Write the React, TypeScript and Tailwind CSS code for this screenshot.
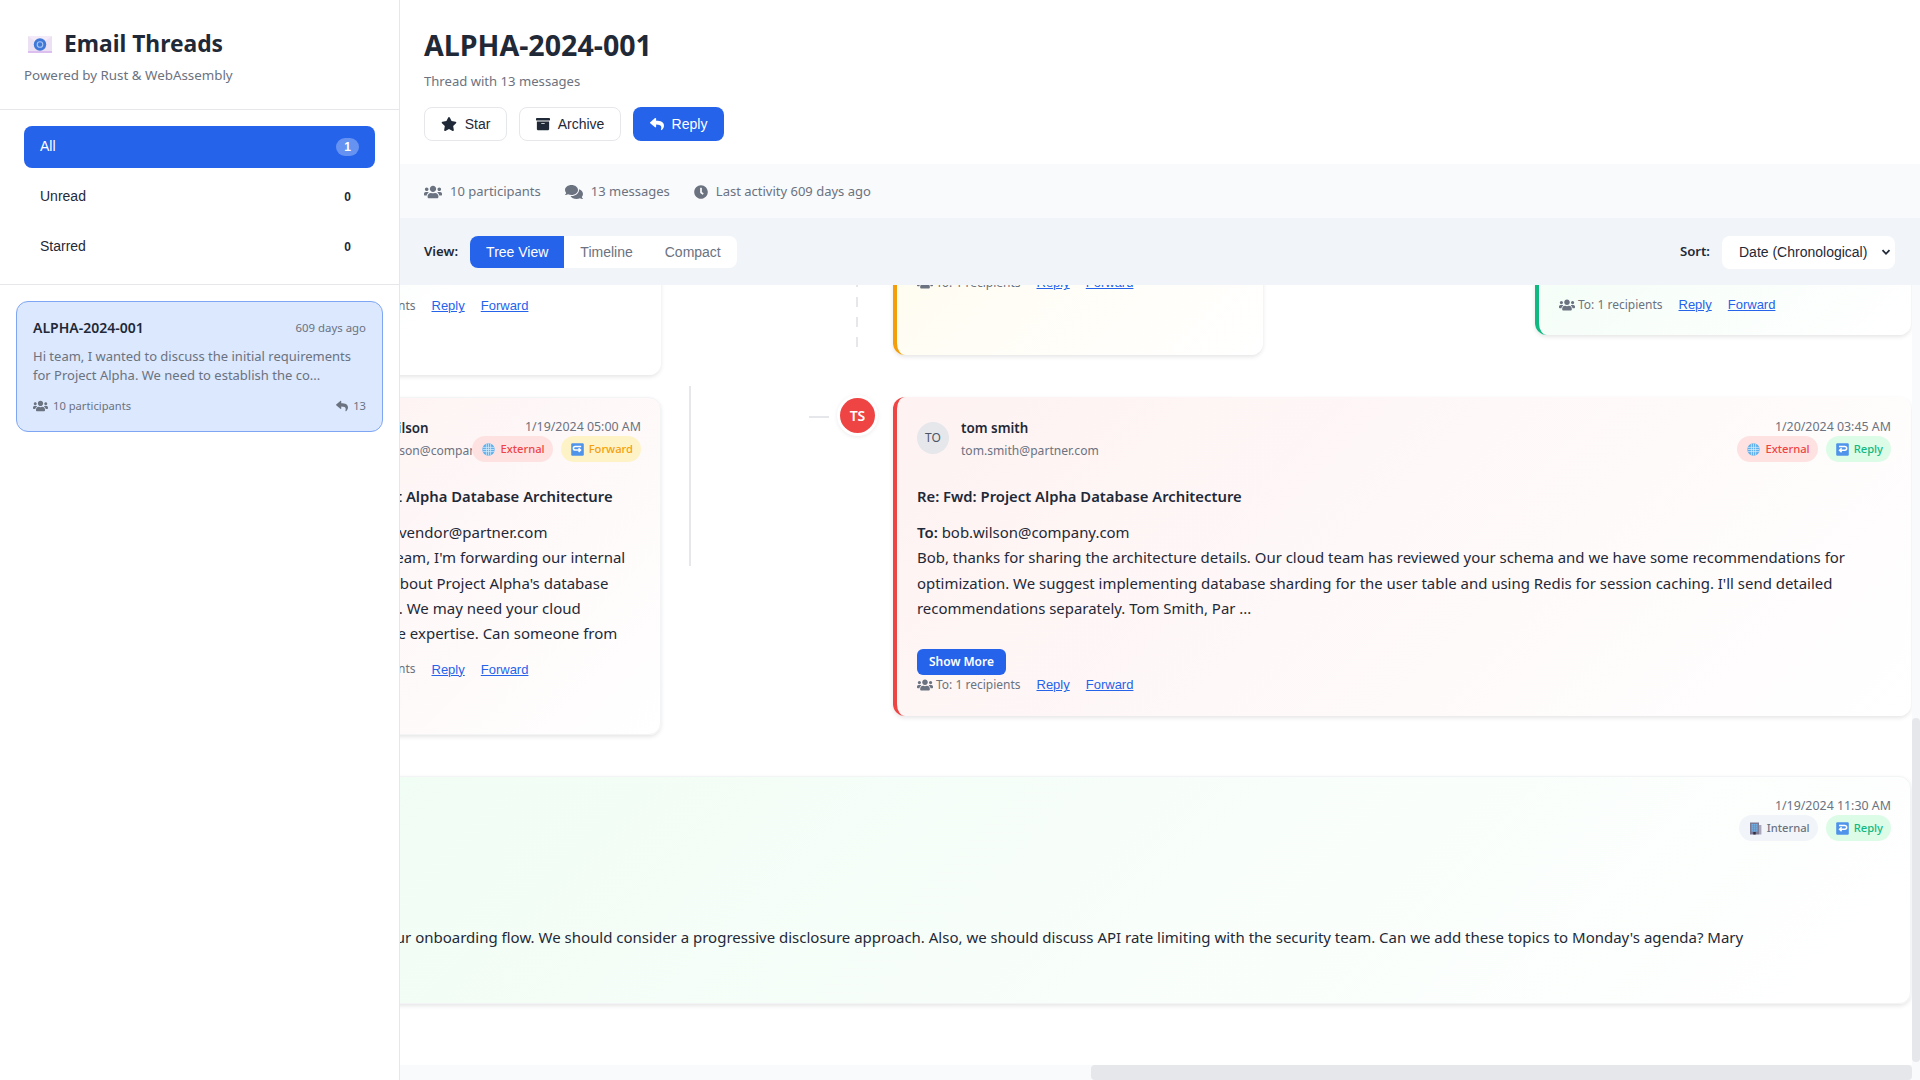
import React from "react";
import { FaStar, FaArchive, FaReply, FaUsers, FaComments, FaClock } from "react-icons/fa";

const ui = "font-['Noto_Sans',sans-serif]";
const arial = "font-['Liberation_Sans',Arial,sans-serif]";

type BadgeKind = "External" | "Internal" | "Forward" | "Reply";
const badgeStyle: Record<BadgeKind, string> = {
  External: "bg-[#fee2e2] text-[#ef4444]",
  Internal: "bg-[#f1f5f9] text-[#6b7280]",
  Forward: "bg-[#fef3c7] text-[#f59e0b]",
  Reply: "bg-[#dcfce7] text-[#10b981]",
};

function GlobeIcon() {
  return (
    <svg className="h-[13px] w-[13px] shrink-0" viewBox="0 0 13 13">
      <circle cx="6.5" cy="6.5" r="6.2" fill="#5fb0ec" />
      <g stroke="#cfe8fa" strokeWidth="0.8" fill="none">
        <path d="M.6 4.4h11.8M.6 6.5h11.8M.6 8.6h11.8M4.4.8v11.4M6.5.4v12.2M8.6.8v11.4" />
      </g>
    </svg>
  );
}
function ArrowBoxIcon({ forward }: { forward?: boolean }) {
  return (
    <svg className="h-[13px] w-[13px] shrink-0" viewBox="0 0 13 13">
      <rect width="12.6" height="12.6" x="0.2" y="0.2" rx="1.2" fill="#4f94ea" />
      {forward ? (
        <path d="M10.2 3.4H4.2a1.7 1.7 0 0 0 0 3.6h5.2M7.6 5.2 9.6 7l-2 1.9" stroke="#fff" strokeWidth="1.5" fill="none" />
      ) : (
        <path d="M3 3.4h5.8a1.7 1.7 0 0 1 0 3.8H3.6M5.6 5.3 3.6 7.2l2 1.9" stroke="#fff" strokeWidth="1.5" fill="none" />
      )}
    </svg>
  );
}
function BuildingIcon() {
  return (
    <svg className="h-[13px] w-[13px] shrink-0" viewBox="0 0 13 13">
      <rect x="1" y="0.5" width="9" height="12" fill="#7c7a94" />
      <rect x="10" y="3" width="2.4" height="9.5" fill="#a9a8ba" />
      <path d="M2.5 2h6v7.6h-6z" fill="#6fb2e8" />
      <path d="M2.5 3.8h6M2.5 5.8h6M2.5 7.8h6M4.5 2v7.6M6.5 2v7.6" stroke="#7c7a94" strokeWidth="0.5" />
      <rect x="4.3" y="10" width="2.4" height="2.5" fill="#2f2d3f" />
    </svg>
  );
}

function Badge({ kind }: { kind: BadgeKind }) {
  return (
    <span className={`inline-flex h-[26px] items-center gap-[5px] rounded-full pr-[8px] pl-[10px] text-[11.2px] font-medium ${badgeStyle[kind]}`}>
      {kind === "External" && <GlobeIcon />}
      {kind === "Internal" && <BuildingIcon />}
      {kind === "Forward" && <ArrowBoxIcon forward />}
      {kind === "Reply" && <ArrowBoxIcon />}
      {kind}
    </span>
  );
}

function CardFooter() {
  return (
    <div className="flex h-[20px] items-center text-[12px] text-[#6b7280]">
      <FaUsers className="mr-[3px] h-[16px] w-[16px]" />
      <span className="mr-[16px]">To: 1 recipients</span>
      <a className={`mr-[16px] text-[13px] text-[#2563eb] underline ${arial}`}>Reply</a>
      <a className={`text-[13px] text-[#2563eb] underline ${arial}`}>Forward</a>
    </div>
  );
}

function Header({ initials, name, email, date, badges }: { initials: string; name: string; email: string; date: string; badges: BadgeKind[] }) {
  return (
    <div className="flex items-start">
      <div className="flex min-w-0 flex-1 items-start overflow-hidden pt-[4px]">
        <div className="mt-[1px] flex h-[32px] w-[32px] shrink-0 items-center justify-center rounded-full bg-[#e5e7eb] text-[12px] text-[#4b5563]">{initials}</div>
        <div className="ml-[12px] whitespace-nowrap">
          <div className="text-[13.4px] leading-[14px] font-semibold text-[#1f2937]">{name}</div>
          <div className="mt-[7px] text-[12.1px] leading-[18px] text-[#6b7280]">{email}</div>
        </div>
      </div>
      <div className="flex shrink-0 flex-col items-end">
        <div className="text-[12.4px] leading-[19px] text-[#6b7280]">{date}</div>
        <div className="flex gap-[8px]"><Badge kind={badges[0]} /><Badge kind={badges[1]} /></div>
      </div>
    </div>
  );
}

export default function App() {
  return (
    <div className={`flex h-screen w-[1920px] overflow-hidden bg-white text-[#1f2937] ${ui}`}>
      {/* Sidebar */}
      <aside className="flex w-[400px] shrink-0 flex-col border-r border-[#e5e7eb]">
        <div className="h-[110px] border-b border-[#e5e7eb] pt-[28px] pl-[24px]">
          <div className="flex h-[32px] items-center text-[22.8px] leading-[32px] font-bold">
            <svg className="mr-[12px] ml-[4px] h-[17px] w-[24px] shrink-0" viewBox="0 0 24 17">
              <rect width="24" height="17" fill="#ece0f3" />
              <rect y="15" width="24" height="2" fill="#dcbfee" />
              <path d="M0 0l12 9L24 0" fill="#f4ebf8" />
              <circle cx="12" cy="8.5" r="6.2" fill="#3f78d8" />
              <circle cx="12" cy="8.5" r="2.8" fill="none" stroke="#a9c6f2" strokeWidth="1.1" />
            </svg>
            Email Threads
          </div>
          <div className="mt-[5px] text-[13.35px] leading-[20px] text-[#6b7280]">Powered by Rust &amp; WebAssembly</div>
        </div>
        <div className={`flex h-[175px] flex-col gap-[8px] border-b border-[#e5e7eb] px-[24px] pt-[16px] text-[14px] ${arial}`}>
          <div className="flex h-[42px] items-center justify-between rounded-lg bg-[#2563eb] px-[16px] text-white">
            <span className="pb-[2px]">All</span>
            <span className="flex h-[18px] w-[23px] items-center justify-center rounded-full bg-white/30 text-[12px] font-bold">1</span>
          </div>
          <div className="flex h-[42px] items-center justify-between px-[16px]">
            <span className="pb-[2px]">Unread</span>
            <span className="flex w-[23px] justify-center text-[12px] font-bold">0</span>
          </div>
          <div className="flex h-[42px] items-center justify-between px-[16px]">
            <span className="pb-[2px]">Starred</span>
            <span className="flex w-[23px] justify-center text-[12px] font-bold">0</span>
          </div>
        </div>
        <div className="p-[16px]">
          <div className="h-[131px] rounded-xl border border-[#7fa6f3] bg-[#dbe8fe] px-[16px] pt-[16px]">
            <div className="flex items-center justify-between">
              <span className="text-[14px] leading-[20px] font-semibold">ALPHA-2024-001</span>
              <span className="text-[11.4px] leading-[16px] text-[#6b7280]">609 days ago</span>
            </div>
            <div className="mt-[9px] text-[13px] leading-[19px] text-[#6b7280]">
              Hi team, I wanted to discuss the initial requirements for Project Alpha. We need to establish the co...
            </div>
            <div className="mt-[13px] flex items-center justify-between text-[11.2px] leading-[16px] text-[#6b7280]">
              <span className="flex items-center gap-[5px]"><FaUsers className="h-[14px] w-[15px]" />10 participants</span>
              <span className="flex items-center gap-[5px]"><FaReply className="h-[12px] w-[12px]" />13</span>
            </div>
          </div>
        </div>
      </aside>

      {/* Main */}
      <main className="flex min-w-0 flex-1 flex-col">
        <header className="h-[164px] shrink-0 px-[24px] pt-[24px]">
          <h1 className="text-[28.6px] leading-[42px] font-bold">ALPHA-2024-001</h1>
          <div className="mt-[5px] text-[13.1px] leading-[20px] text-[#6b7280]">Thread with 13 messages</div>
          <div className={`mt-[16px] flex gap-[12px] text-[14px] ${arial}`}>
            <button className="flex h-[34px] w-[83px] items-center justify-center gap-[8px] rounded-lg border border-[#e5e7eb] bg-white"><FaStar className="h-[14px] w-[16px]" />Star</button>
            <button className="flex h-[34px] w-[102px] items-center justify-center gap-[8px] rounded-lg border border-[#e5e7eb] bg-white"><FaArchive className="h-[14px] w-[14px]" />Archive</button>
            <button className="flex h-[34px] w-[91px] items-center justify-center gap-[8px] rounded-lg bg-[#2563eb] text-white"><FaReply className="h-[14px] w-[14px]" />Reply</button>
          </div>
        </header>

        <div className="flex h-[54px] shrink-0 items-center gap-[24px] bg-[#f8fafc] px-[24px] pt-[2px] text-[13px] text-[#6b7280]">
          <span className="flex items-center gap-[8px]"><FaUsers className="h-[16px] w-[18px]" />10 participants</span>
          <span className="flex items-center gap-[8px]"><FaComments className="h-[16px] w-[18px]" />13 messages</span>
          <span className="flex items-center gap-[8px]"><FaClock className="h-[14px] w-[14px]" />Last activity 609 days ago</span>
        </div>

        <div className="flex h-[67px] shrink-0 items-center justify-between bg-[#f1f5f9] pr-[25px] pl-[24px]">
          <div className="mt-[1px] flex items-center">
            <span className="mr-[12px] text-[13.2px] font-semibold">View:</span>
            <div className={`flex h-[32px] overflow-hidden rounded-lg bg-white text-[14px] text-[#6b7280] ${arial}`}>
              <span className="flex items-center bg-[#2563eb] px-[16px] text-white">Tree View</span>
              <span className="flex items-center px-[16px]">Timeline</span>
              <span className="flex items-center px-[16px]">Compact</span>
            </div>
          </div>
          <div className="mt-[1px] flex items-center">
            <span className="mr-[12px] text-[13.2px] font-semibold">Sort:</span>
            <div className={`relative flex h-[33px] w-[173px] items-center rounded-lg bg-white pl-[17px] text-[14px] ${arial}`}>
              Date (Chronological)
              <svg className="absolute right-[4px] h-[10px] w-[10px]" viewBox="0 0 10 10" fill="none" stroke="#1f2937" strokeWidth="1.8"><path d="M1.5 3.2 5 6.8l3.5-3.6" /></svg>
            </div>
          </div>
        </div>

        {/* Tree canvas: a scrolled diagram, nodes sit at their own coordinates */}
        <div className="relative min-h-0 flex-1 overflow-hidden">
          {/* connectors */}
          <div className="absolute top-[-8px] left-[456px] h-[70px] w-[2px] bg-[repeating-linear-gradient(to_bottom,#e5e7eb_0,#e5e7eb_10px,transparent_10px,transparent_20px)]" />
          <div className="absolute top-[101px] left-[289px] h-[180px] w-[2px] bg-[#e5e7eb]" />
          <div className="absolute top-[131px] left-[409px] h-[2px] w-[20px] bg-[#e5e7eb]" />
          <div className="absolute top-[113px] left-[440px] flex h-[35px] w-[35px] items-center justify-center rounded-full bg-[#ef4444] text-[14px] font-semibold text-white shadow-[0_0_0_3px_#fff,0_1px_4px_3px_rgba(0,0,0,0.08)]">TS</div>

          {/* Card A (top left) */}
          <div className="absolute top-[-220px] left-[-110px] h-[310px] w-[371px] rounded-xl bg-[linear-gradient(135deg,#f0fdf4,#ffffff_60%)] shadow-[0_2px_4px_rgba(0,0,0,0.1)]">
            <div className="absolute bottom-[59px] left-[22px]"><CardFooter /></div>
          </div>

          {/* Card B (bob wilson) */}
          <div className="absolute top-[112px] left-[-110px] h-[338px] w-[371px] rounded-xl border border-[#f3f4f6] bg-[linear-gradient(135deg,#fef2f2,#ffffff)] pt-[19px] pr-[19px] pl-[23px] shadow-[0_2px_4px_rgba(0,0,0,0.1)]">
            <Header initials="BO" name="bob wilson" email="bob.wilson@company.com" date="1/19/2024 05:00 AM" badges={["External", "Forward"]} />
            <div className="mt-[22px] text-[14.8px] leading-[24px] font-semibold whitespace-nowrap">Fwd: Project Alpha Database Architecture</div>
            <div className="mt-[12px] text-[15px] leading-[25.3px] whitespace-nowrap">
              <div><b className="font-semibold">To:</b> services.vendor@partner.com</div>
              <div>Hi Partner team, I'm forwarding our internal</div>
              <div>discussion about Project Alpha's database</div>
              <div>architecture. We may need your cloud</div>
              <div className="ml-[-5px]">infrastructure expertise. Can someone from</div>
            </div>
            <div className="mt-[13px] ml-[-2px]"><CardFooter /></div>
          </div>

          {/* Orange card */}
          <div className="absolute top-[-200px] left-[493px] h-[270px] w-[370px] rounded-xl border-l-4 border-[#f59e0b] bg-[linear-gradient(135deg,#fffbeb,#ffffff)] shadow-[0_2px_4px_rgba(0,0,0,0.1)]">
            <div className="absolute bottom-[62px] left-[20px]"><CardFooter /></div>
          </div>

          {/* Green card */}
          <div className="absolute top-[-200px] left-[1135px] h-[250px] w-[376px] rounded-xl border-l-4 border-[#10b981] bg-[linear-gradient(135deg,#f0fdf4,#ffffff)] shadow-[0_2px_4px_rgba(0,0,0,0.1)]">
            <div className="absolute bottom-[20px] left-[20px]"><CardFooter /></div>
          </div>

          {/* tom smith */}
          <div className="absolute top-[112px] left-[493px] h-[319px] w-[1018px] rounded-xl border-l-4 border-[#ef4444] bg-[linear-gradient(135deg,#fef2f2,#ffffff)] pt-[20px] pr-[20px] pl-[20px] shadow-[0_2px_4px_rgba(0,0,0,0.1)]">
            <Header initials="TO" name="tom smith" email="tom.smith@partner.com" date="1/20/2024 03:45 AM" badges={["External", "Reply"]} />
            <div className="mt-[22px] text-[14.8px] leading-[24px] font-semibold">Re: Fwd: Project Alpha Database Architecture</div>
            <div className="mt-[12px] text-[14.94px] leading-[25.3px]">
              <b className="font-semibold">To:</b> bob.wilson@company.com<br />
              Bob, thanks for sharing the architecture details. Our cloud team has reviewed your schema and we have some recommendations for optimization. We suggest implementing database sharding for the user table and using Redis for session caching. I'll send detailed recommendations separately. Tom Smith, Par ...
            </div>
            <button className={`mt-[28px] block h-[26px] w-[89px] rounded-md bg-[#2563eb] text-[12px] font-semibold text-white ${ui}`}>Show More</button>
            <CardFooter />
          </div>

          {/* Bottom card */}
          <div className="absolute top-[491px] left-[-400px] h-[228px] w-[1911px] rounded-xl border border-[#f3f4f6] bg-[linear-gradient(135deg,#f0fdf4,#f0fdf4_15%,#ffffff)] pt-[19px] pr-[19px] pl-[23px] shadow-[0_2px_4px_rgba(0,0,0,0.1)]">
            <Header initials="MA" name="mary" email="mary@company.com" date="1/19/2024 11:30 AM" badges={["Internal", "Reply"]} />
            <div className="mt-[84px] ml-[-9px] text-[15px] leading-[25px] whitespace-nowrap">
              Hi team, I've reviewed the latest design mockups for our onboarding flow. We should consider a progressive disclosure approach. Also, we should discuss API rate limiting with the security team. Can we add these topics to Monday's agenda? Mary
            </div>
          </div>

          {/* scrollbars */}
          <div className="absolute top-0 right-0 bottom-0 w-[8px] bg-[#f8fafc]">
            <div className="absolute top-[433px] left-0 h-[344px] w-[8px] rounded bg-[#e5e7eb]" />
          </div>
          <div className="absolute right-[8px] bottom-0 left-0 flex h-[15px] justify-end bg-[#f8fafc]">
            <div className="h-[15px] w-[821px] rounded bg-[#e5e7eb]" />
          </div>
        </div>
      </main>
    </div>
  );
}
